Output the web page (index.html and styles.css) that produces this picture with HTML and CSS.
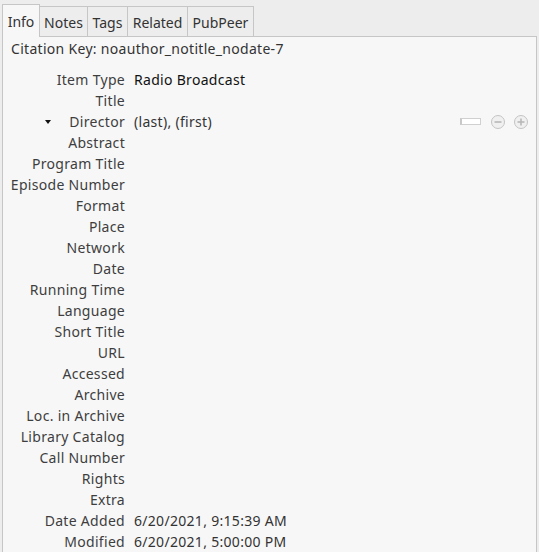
FILE: index.html
```html
<!DOCTYPE html>
<html>
<head>
<meta charset="utf-8">
<link rel="stylesheet" href="styles.css">
</head>
<body>
<div class="tabs">
  <div class="tab tab-info selected">Info</div>
  <div class="tab tab-notes">Notes</div>
  <div class="tab tab-tags">Tags</div>
  <div class="tab tab-related">Related</div>
  <div class="tab tab-pubpeer">PubPeer</div>
</div>
<div class="panel">
  <div class="citekey">Citation Key: noauthor_notitle_nodate-7</div>
  <div class="fields">
    <div class="label">Item Type</div><div class="value dark">Radio Broadcast</div>
    <div class="label">Title</div><div class="value"></div>
    <div class="label creator"><span class="twisty"></span>Director</div>
    <div class="value creator-value">
      <span>(last), (first)</span>
      <span class="controls">
        <span class="mini-box"></span>
        <svg class="circ" width="16" height="16" viewBox="0 0 16 16"><circle cx="8" cy="8" r="6.5" fill="#f0f0f0" stroke="#c4c4c4"/><rect x="4.5" y="7.2" width="7" height="1.6" fill="#b8b8b8"/></svg>
        <svg class="circ" width="16" height="16" viewBox="0 0 16 16"><circle cx="8" cy="8" r="6.5" fill="#f0f0f0" stroke="#c4c4c4"/><rect x="4.5" y="7.2" width="7" height="1.6" fill="#b8b8b8"/><rect x="7.2" y="4.5" width="1.6" height="7" fill="#b8b8b8"/></svg>
      </span>
    </div>
    <div class="label">Abstract</div><div class="value"></div>
    <div class="label">Program Title</div><div class="value"></div>
    <div class="label">Episode Number</div><div class="value"></div>
    <div class="label">Format</div><div class="value"></div>
    <div class="label">Place</div><div class="value"></div>
    <div class="label">Network</div><div class="value"></div>
    <div class="label">Date</div><div class="value"></div>
    <div class="label">Running Time</div><div class="value"></div>
    <div class="label">Language</div><div class="value"></div>
    <div class="label">Short Title</div><div class="value"></div>
    <div class="label">URL</div><div class="value"></div>
    <div class="label">Accessed</div><div class="value"></div>
    <div class="label">Archive</div><div class="value"></div>
    <div class="label">Loc. in Archive</div><div class="value"></div>
    <div class="label">Library Catalog</div><div class="value"></div>
    <div class="label">Call Number</div><div class="value"></div>
    <div class="label">Rights</div><div class="value"></div>
    <div class="label">Extra</div><div class="value"></div>
    <div class="label">Date Added</div><div class="value">6/20/2021, 9:15:39 AM</div>
    <div class="label">Modified</div><div class="value">6/20/2021, 5:00:00 PM</div>
  </div>
</div>
</body>
</html>
```

FILE: styles.css
```css
html, body {
  margin: 0;
  padding: 0;
  background: #ededed;
  font-family: "Noto Sans", "DejaVu Sans", sans-serif;
  font-size: 14px;
  letter-spacing: 0.3px;
  color: #3c3c3c;
  overflow: hidden;
}

.tabs {
  display: flex;
  align-items: flex-end;
  height: 36px;
  padding-left: 2px;
  position: relative;
  z-index: 2;
}

.tab {
  box-sizing: border-box;
  height: 30px;
  border: 1px solid #c6c6c6;
  border-bottom: none;
  border-left: none;
  background: #ededed;
  display: flex;
  align-items: center;
  justify-content: center;
  color: #333;
  padding-top: 2px;
  letter-spacing: 0;
}

.tab-info { width: 38px; border-left: 1px solid #c6c6c6; }
.tab-notes { width: 48px; }
.tab-tags { width: 40px; }
.tab-related { width: 60px; }
.tab-pubpeer { width: 66px; }

.tab.selected {
  height: 33px;
  margin-bottom: -1px;
  background: #f7f7f7;
  padding-top: 0;
}

.panel {
  margin-left: 2px;
  width: 535px;
  box-sizing: border-box;
  height: 600px;
  border: 1px solid #c6c6c6;
  background: #f7f7f7;
}

.citekey {
  padding-left: 8px;
  height: 22px;
  line-height: 22px;
  margin-top: 1px;
  color: #333;
}

.fields {
  display: grid;
  grid-template-columns: 122px 1fr;
  grid-auto-rows: 21px;
  column-gap: 9px;
  margin-top: 9px;
  padding-right: 7px;
}

.label {
  text-align: right;
  line-height: 21px;
  white-space: nowrap;
  color: #3e3e3e;
}

.value {
  line-height: 21px;
  white-space: nowrap;
  color: #333;
}

.value.dark {
  color: #111;
}

.label.creator {
  display: flex;
  justify-content: flex-end;
  align-items: center;
}

.twisty {
  width: 0;
  height: 0;
  border-left: 3.5px solid transparent;
  border-right: 3.5px solid transparent;
  border-top: 4px solid #111;
  margin-right: 18px;
}

.creator-value {
  display: flex;
  align-items: center;
}

.controls {
  margin-left: auto;
  display: flex;
  align-items: center;
  gap: 7px;
}

.mini-box {
  box-sizing: border-box;
  width: 21px;
  height: 7px;
  border: 1px solid #d0d0d0;
  border-left: 2px solid #c8c8c8;
  background: #fff;
  margin-right: 2px;
}

.circ {
  display: block;
}
```
